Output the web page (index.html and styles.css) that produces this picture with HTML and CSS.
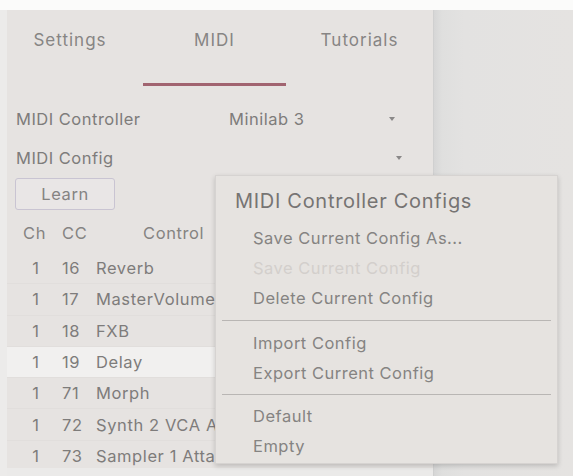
FILE: index.html
```html
<!DOCTYPE html>
<html>
<head>
<meta charset="utf-8">
<link rel="stylesheet" href="styles.css">
</head>
<body>
<div class="app">
  <div class="edge"></div>
  <div class="panel">
    <div class="tabs">
      <div class="tab tab-first">Settings</div>
      <div class="tab active">MIDI</div>
      <div class="tab">Tutorials</div>
    </div>
    <div class="fields">
      <div class="field">
        <span class="label">MIDI Controller</span>
        <span class="value">Minilab 3</span>
        <span class="arrow"></span>
      </div>
      <div class="field">
        <span class="label">MIDI Config</span>
        <span class="value"></span>
        <span class="arrow arrow-b"></span>
      </div>
    </div>
    <div class="learn-row">
      <button class="learn">Learn</button>
    </div>
    <div class="thead">
      <span class="c-ch">Ch</span>
      <span class="c-cc">CC</span>
      <span class="c-ctl">Control</span>
    </div>
    <div class="rows">
      <div class="row"><span class="c-ch">1</span><span class="c-cc">16</span><span class="c-ctl">Reverb</span></div>
      <div class="row"><span class="c-ch">1</span><span class="c-cc">17</span><span class="c-ctl">MasterVolume</span></div>
      <div class="row"><span class="c-ch">1</span><span class="c-cc">18</span><span class="c-ctl">FXB</span></div>
      <div class="row selected"><span class="c-ch">1</span><span class="c-cc">19</span><span class="c-ctl">Delay</span></div>
      <div class="row"><span class="c-ch">1</span><span class="c-cc">71</span><span class="c-ctl">Morph</span></div>
      <div class="row"><span class="c-ch">1</span><span class="c-cc">72</span><span class="c-ctl">Synth 2 VCA Attack</span></div>
      <div class="row"><span class="c-ch">1</span><span class="c-cc">73</span><span class="c-ctl">Sampler 1 Attack</span></div>
    </div>
  </div>
  <div class="side"></div>
</div>

<div class="menu">
  <div class="menu-title">MIDI Controller Configs</div>
  <div class="menu-item">Save Current Config As...</div>
  <div class="menu-item disabled">Save Current Config</div>
  <div class="menu-item">Delete Current Config</div>
  <div class="menu-sep"></div>
  <div class="menu-item">Import Config</div>
  <div class="menu-item">Export Current Config</div>
  <div class="menu-sep sep-2"></div>
  <div class="menu-item">Default</div>
  <div class="menu-item">Empty</div>
</div>
</body>
</html>
```

FILE: styles.css
```css
html, body {
  margin: 0;
  padding: 0;
}
body {
  width: 573px;
  height: 476px;
  overflow: hidden;
  background: #fbfbfa;
  font-family: "Inter", "Roboto", "Liberation Sans", sans-serif;
  color: #7e7c7b;
  position: relative;
}
.app {
  margin-top: 10px;
  display: flex;
  height: 466px;
  background: #ebeae9;
}
.edge {
  width: 7px;
  background: #ecebea;
}
.panel {
  width: 426px;
  height: 458px;
  background: #e6e3e1;
  overflow: hidden;
}
.side {
  flex: 1;
  background: linear-gradient(90deg, #d6d6d6 0px, #dfdfde 8px, #e3e2e1 30px, #e5e3e1 100%);
  border-left: 1px solid #d0d0d0;
}

/* tabs */
.tabs {
  display: grid;
  grid-template-columns: 136px 143px 1fr;
  height: 76px;
}
.tab {
  text-align: center;
  font-size: 17px;
  letter-spacing: 1px;
  line-height: 20px;
  padding-top: 20px;
  color: #878584;
}
.tab-first {
  padding-right: 10px;
}
.tab.active {
  border-bottom: 3px solid #a16470;
  box-sizing: border-box;
}

/* fields */
.fields {
  padding-top: 13px;
}
.field {
  display: flex;
  align-items: center;
  height: 39px;
  font-size: 16.5px;
  letter-spacing: 0.5px;
  padding-left: 9px;
}
.label {
  width: 213px;
}
.value {
  width: 160px;
}
.arrow {
  width: 0;
  height: 0;
  border-left: 3px solid transparent;
  border-right: 3px solid transparent;
  border-top: 4px solid #8a8888;
}
.arrow-b {
  margin-left: 7px;
}

.learn-row {
  padding: 1px 0 0 8px;
  height: 34px;
}
.learn {
  width: 100px;
  height: 32px;
  box-sizing: border-box;
  border: 1px solid #c9c4d2;
  border-radius: 3px;
  background: #e9e6e6;
  font-family: inherit;
  font-size: 16.5px;
  letter-spacing: 0.6px;
  color: #858382;
  padding: 0;
}

/* table */
.thead, .row {
  display: flex;
  align-items: center;
  font-size: 16.5px;
  letter-spacing: 0.6px;
}
.thead {
  height: 41px;
  color: #858382;
}
.thead .c-ch {
  width: 24px;
  margin-left: 16px;
  text-align: left;
}
.thead .c-cc {
  margin-left: 15px;
  width: 30px;
}
.thead .c-ctl {
  margin-left: 51px;
}
.row {
  height: 31.3px;
  box-sizing: border-box;
  border-bottom: 1px solid #e1dedc;
}
.row.selected {
  background: #f1f0ef;
}
.row .c-ch {
  width: 10px;
  margin-left: 24px;
  text-align: center;
}
.row .c-cc {
  margin-left: 21px;
  width: 34px;
}
.row .c-ctl {
  white-space: nowrap;
}

/* popup menu */
.menu {
  position: absolute;
  left: 215px;
  top: 175px;
  width: 343px;
  height: 289px;
  box-sizing: border-box;
  background: #e6e3e0;
  border: 1px solid #d6d3d1;
  box-shadow: 0 2px 5px rgba(0, 0, 0, 0.18);
  padding-top: 11px;
}
.menu-title {
  font-size: 20px;
  letter-spacing: 0.7px;
  line-height: 28px;
  padding-left: 19px;
  margin-bottom: 8px;
  color: #767473;
}
.menu-item {
  font-size: 16.5px;
  letter-spacing: 0.5px;
  line-height: 30px;
  height: 30px;
  padding-left: 37px;
  color: #858382;
}
.menu-item.disabled {
  color: #d3cfcc;
}
.menu-sep {
  height: 1px;
  background: #b9b6b4;
  margin: 7px 6px 7px 6px;
}
.sep-2 {
  margin: 6px 6px 6px 6px;
}
```
